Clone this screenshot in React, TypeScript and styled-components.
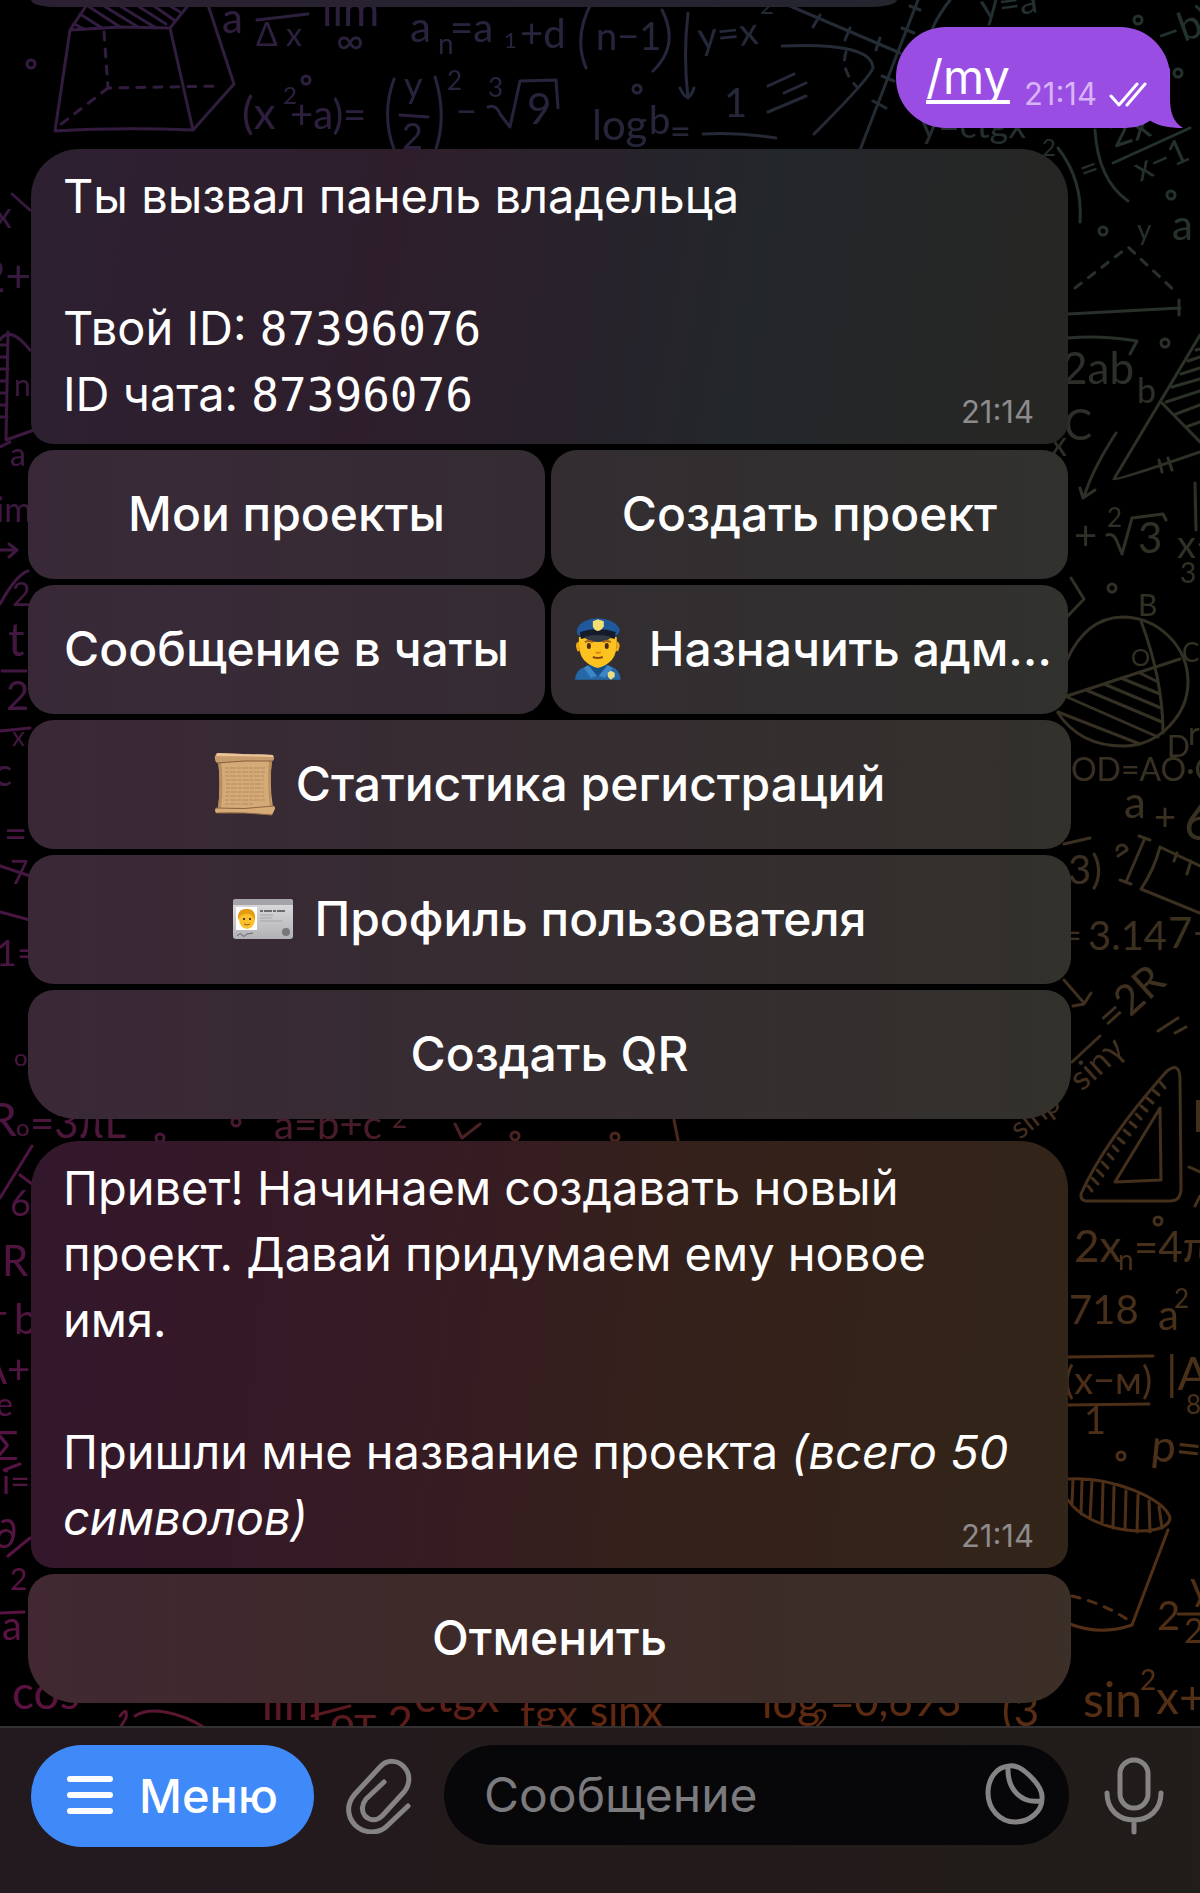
import React from "react";
import styled, { createGlobalStyle, css } from "styled-components";

const GlobalStyle = createGlobalStyle`
  * {
    box-sizing: border-box;
  }

  body {
    margin: 0;
    background: #000;
    color: #fff;
    font-family: Inter, "Noto Sans", sans-serif;
  }

  button,
  input {
    font: inherit;
    color: inherit;
    border: 0;
  }

  button {
    cursor: pointer;
  }
`;

const Screen = styled.div`
  position: relative;
  isolation: isolate;
  overflow: hidden;
  min-height: 100vh;
  display: flex;
  flex-direction: column;
`;

const WallpaperSvg = styled.svg`
  position: absolute;
  inset: 0;
  z-index: -1;
  width: 100%;
  height: 100%;
`;

const Chat = styled.main`
  flex: 1;
  display: flex;
  flex-direction: column;
  padding: 0 17px 22px 28px;
`;

const PreviousMessage = styled.div`
  width: 75%;
  height: 7px;
  margin-left: 3px;
  border-radius: 0 0 28px 24px / 0 0 7px 7px;
  background: linear-gradient(90deg, #2b2031, #24252f);
`;

const Outgoing = styled.div`
  position: relative;
  align-self: flex-end;
  display: flex;
  align-items: flex-end;
  height: 101px;
  margin: 20px 13px 21px 0;
  padding: 0 23px 18px 30px;
  border-radius: 50px 50px 44px 50px;
  background: #994de3;

  a {
    margin-bottom: 4px;
    color: inherit;
    font-size: 47px;
    line-height: 58px;
    text-decoration-thickness: 4px;
    text-underline-offset: 6px;
    text-decoration-skip-ink: none;
  }

  time {
    margin: 0 12px 0 14px;
    color: #d9b3f7;
    font-size: 31px;
    line-height: 32px;
  }
`;

const Tail = styled.svg`
  position: absolute;
  right: -13px;
  bottom: 0;
`;

const Checks = styled.svg`
  margin-bottom: 2px;
`;

const Bubble = styled.section<{ $warm?: boolean }>`
  position: relative;
  width: calc(100% - 118px);
  margin: 0 0 6px 3px;
  padding: 14px 32px 17px 32px;
  border-radius: 48px 48px 22px 22px;
  font-size: 47px;
  line-height: 66px;
  background: linear-gradient(100deg, #2d2031 0%, #2e1e2c 35%, #23262b 68%, #262723 100%);

  ${({ $warm }) =>
    $warm &&
    css`
      background: linear-gradient(97deg, #33172c 0%, #361a24 35%, #35211b 62%, #322519 100%);
    `}

  p {
    margin: 0;
    min-height: 66px;
  }

  time {
    position: absolute;
    right: 34px;
    bottom: 15px;
    color: #8e8b8c;
    font-size: 31px;
    line-height: 34px;
  }
`;

const Code = styled.code`
  font-family: "DejaVu Sans Mono", monospace;
  font-size: 46px;
  line-height: 1;
`;

const Keyboard = styled.div`
  display: flex;
  flex-direction: column;
  gap: 6px;
  width: calc(100% - 112px);
  margin-bottom: 22px;

  &:last-child {
    margin-bottom: 0;
  }
`;

const KeyRow = styled.div`
  display: grid;
  grid-template-columns: 1fr 1fr;
  gap: 6px;
  padding-right: 3px;
`;

const Key = styled.button<{ $tone?: "left" | "right" | "warm"; $last?: boolean }>`
  display: flex;
  align-items: center;
  justify-content: center;
  gap: 20px;
  min-width: 0;
  height: 129px;
  padding: 0 16px 2px;
  border-radius: ${({ $last }) => ($last ? "26px 26px 48px 48px" : "26px")};
  font-size: 48px;
  font-weight: 500;
  white-space: nowrap;
  background: ${({ $tone }) => {
    if ($tone === "left") return "linear-gradient(90deg, #392938, #352c33)";
    if ($tone === "right") return "linear-gradient(90deg, #332d31, #31312e)";
    if ($tone === "warm") return "linear-gradient(90deg, #412832, #3e2a29 40%, #3b2f28)";
    return "linear-gradient(90deg, #3a2837, #362d31 50%, #33312c)";
  }};
`;

const Composer = styled.form`
  display: flex;
  align-items: flex-start;
  height: 167px;
  padding: 17px 36px 0 31px;
  border-top: 2px solid #343133;
  background: linear-gradient(90deg, #231a20, #231a1b 50%, #211d1a);
`;

const MenuButton = styled.button`
  display: flex;
  align-items: center;
  justify-content: center;
  gap: 26px;
  width: 283px;
  height: 102px;
  margin-right: 32px;
  padding: 0 0 2px;
  border-radius: 51px;
  background: #3f89f9;
  font-size: 47px;
  font-weight: 500;
`;

const IconButton = styled.button`
  display: flex;
  align-items: center;
  justify-content: center;
  height: 102px;
  padding: 0;
  background: none;
  color: #868385;
`;

const Field = styled.label`
  flex: 1;
  min-width: 0;
  display: flex;
  align-items: center;
  height: 100px;
  margin: 0 35px 0 32px;
  padding: 0 24px 2px 40px;
  border-radius: 50px;
  background: #070609;
  color: #868385;

  input {
    flex: 1;
    min-width: 0;
    padding: 0;
    background: none;
    outline: none;
    color: #fff;
    font-size: 48px;

    &::placeholder {
      color: #7b7a7d;
      opacity: 1;
    }
  }
`;

type Note = [text: string, x: number, y: number, size: number, rotate?: number];

const notes: Note[] = [
  ["a", 222, 33, 42], ["Δ x", 256, 46, 32], ["lim", 322, 26, 44], ["∞", 336, 54, 38],
  ["a", 410, 42, 42], ["n", 438, 54, 28], ["=a", 450, 42, 40], ["1", 504, 48, 22],
  ["+d", 520, 48, 40], ["n−1", 596, 50, 38], ["(x", 242, 129, 44], ["2", 283, 104, 24],
  ["+a)=", 290, 129, 40], ["y", 404, 98, 36], ["2", 402, 149, 36], ["2", 447, 90, 26],
  ["−", 456, 124, 36], ["3", 488, 97, 26], ["9", 527, 124, 42], ["y=x", 699, 50, 38, -6],
  ["2", 760, 14, 24], ["log", 592, 140, 42], ["b", 649, 134, 38], ["=", 670, 144, 36],
  ["1", 724, 117, 40], ["y=a", 982, 20, 36, -8], ["y=ctgx", 920, 138, 36], ["−b)", 1162, 50, 40, -20],
  ["2", 1042, 156, 24], ["=", 1084, 182, 32, -20], ["2x", 1114, 148, 38, -18], ["x−1", 1140, 182, 34, -24],
  ["y", 1137, 240, 28], ["a", 1172, 240, 42], ["2ab", 1062, 384, 44], ["b", 1137, 403, 34],
  ["C", 1064, 440, 42], ["+", 1074, 550, 40], ["2", 1107, 527, 26], ["3", 1138, 553, 42],
  ["x−", 1177, 558, 38], ["3", 1180, 583, 28], ["B", 1138, 616, 30], ["O", 1131, 666, 24],
  ["C", 1182, 662, 26], ["D", 1167, 757, 30], ["r", 1188, 745, 32], ["OD=AO·O", 1071, 781, 32],
  ["a", 1124, 818, 44], ["+", 1154, 830, 38], ["6", 1184, 840, 52], ["3)", 1068, 884, 40],
  ["=", 1062, 948, 34], ["3.14", 1088, 950, 40], ["7−", 1168, 948, 42],
  ["=2R", 1112, 1034, 42, -42], ["sinγ", 1082, 1092, 34, -42], ["sinβ", 1020, 1140, 30, -38],
  ["2x", 1074, 1262, 44], ["n", 1118, 1270, 28], ["=4π", 1134, 1262, 42], ["718", 1069, 1324, 40],
  ["a", 1158, 1330, 42], ["2", 1174, 1308, 26], ["(x−м)", 1064, 1394, 38], ["1", 1084, 1434, 38],
  ["|A", 1166, 1390, 46], ["p=", 1150, 1460, 44, 6], ["8", 1186, 1414, 26], ["2", 1157, 1630, 40],
  ["y", 1190, 1600, 40], ["2", 1184, 1643, 34], ["sin", 1083, 1717, 48], ["2", 1140, 1690, 28],
  ["x+", 1156, 1714, 46], ["R", 1192, 1132, 44],
  ["x", -6, 228, 36], ["2+", -20, 292, 44], ["n", 14, 396, 30], ["a", 10, 466, 32],
  ["im", -4, 522, 34], ["2", 12, 606, 32], ["t", 8, 656, 46], ["2", 6, 710, 40],
  ["x", 12, 746, 26], ["c", -6, 786, 38], ["=", 4, 848, 40], ["7", 10, 884, 32],
  ["1=", -4, 966, 36], ["o", 14, 1066, 24], ["R", -12, 1136, 46],
  ["o", 16, 1136, 24], ["=3πL", 30, 1138, 42], ["6", 10, 1216, 36], ["R", 2, 1276, 42],
  ["+", -14, 1326, 38], ["b", 14, 1334, 42], ["A+", -20, 1384, 40], ["e", -4, 1416, 32],
  ["Σ", -6, 1460, 40], ["i=", 2, 1494, 34], ["∂", -6, 1548, 40], ["2", 10, 1590, 30],
  ["a", 2, 1640, 40], ["a=b+c", 274, 1139, 40], ["2", 392, 1128, 26], ["cos", 12, 1709, 46],
  ["lim", 262, 1720, 46], ["от 2", 330, 1738, 44], ["ctgx", 414, 1712, 46], ["tgx", 520, 1730, 42],
  ["sinx", 590, 1726, 42], ["log", 762, 1718, 44], ["2", 812, 1730, 28], ["=0,693", 830, 1716, 42],
  ["(3", 1002, 1726, 44], ["x", 1050, 456, 34],
];

const shapes = [
  // truncated pyramid
  "M70 30 120 27 170 28 193 130Q120 127 55 131L70 30 88 3M170 28 190 3M208 5 234 84 193 130",
  "M74 24 84 29M80 14 102 28M88 6 120 27M104 6 138 27M120 6 156 28M138 6 166 24M154 6 174 20M170 6 180 12",
  "M257 20 308 14M400 115 428 117M394 79Q381 115 394 149M435 77Q447 115 436 149",
  "M488 107Q496 104 500 114L510 127 520 81 556 80 558 108",
  "M592 2Q573 36 586 68M662 10Q680 45 653 71M688 13Q683 55 688 98M680 88Q688 106 694 88",
  "M703 134Q740 132 776 138M768 86 794 74M784 93 806 83M768 112 806 96",
  "M782 46Q872 42 873 68Q868 80 814 134M790 6 900 53M820 15 813 27M850 28 845 40M880 38 876 50",
  "M918 0 860 150M910 6 920 10M902 28 914 33M882 76 894 81M873 101 886 108M950 0Q930 26 930 40",
  "M1058 148Q1083 180 1080 222M1095 130Q1098 180 1128 201M1113 163 1190 128",
  "M1068 314 1180 308M1179 300 1179 315M1068 338Q1100 335 1137 341L1130 354",
  // hatched triangle
  "M1200 335 1114 479Q1116 481 1200 452M1161 402 1200 442M1196 350 1200 349M1188 361 1200 357M1181 374 1200 368M1172 387 1200 379M1166 402 1200 391M1176 414 1200 405M1186 427 1200 422M1159 460 1162 472M1168 458 1172 470",
  "M1116 433Q1092 470 1084 497M1080 488 1083 498 1095 490M1107 535Q1114 532 1118 544L1122 554 1132 518 1163 514 1166 520M1195 483 1196 530",
  // circle with a shaded sector
  "M1058 713Q1080 746 1123 746C1160 746 1188 714 1188 682C1188 646 1158 617 1122 617Q1086 618 1067 660",
  "M1067 696 1180 659M1141 621Q1163 680 1163 733M1058 712 1140 744M1067 697 1158 737M1086 690 1162 722M1104 684 1161 708M1121 678 1160 694M1140 673 1158 682M1071 578 1084 599 1066 618",
  // ruler
  "M1200 866 1160 847Q1154 870 1141 889L1200 913M1177 853 1174 861M1191 861 1187 874M1139 836 1150 840M1145 838 1126 882M1120 880 1131 884M1064 844 1090 838M1117 850A5 5 0 1 1 1127 850L1118 856",
  "M1064 980 1084 1003M1073 1006 1084 1004 1091 993M1072 1062 1100 1036M1158 1031 1178 1018M1175 1033 1186 1027",
  // set square
  "M1180 1080Q1180 1060 1166 1072Q1104 1142 1081 1194Q1080 1200 1086 1201L1170 1201Q1181 1201 1181 1188ZM1160 1108 1115 1182 1161 1180Z",
  "M1088 1186 1092 1191M1092 1178 1098 1184M1097 1170 1103 1176M1102 1162 1108 1168M1108 1154 1113 1159M1113 1146 1118 1151M1118 1138 1124 1143M1124 1130 1130 1135M1130 1122 1136 1127M1136 1114 1141 1119M1141 1106 1147 1111M1147 1098 1153 1103M1153 1090 1159 1095M1160 1082 1165 1088",
  "M1068 1357 1153 1356M1068 1405 1149 1404M1178 1614 1200 1614M1189 1167 1200 1172M1195 1206 1200 1196",
  // glass
  "M1068 1479C1110 1476 1165 1498 1170 1518C1168 1540 1090 1534 1068 1500M1168 1530 1132 1625Q1100 1636 1070 1624M1073 1480 1072 1504M1082 1480 1081 1514M1092 1481 1090 1519M1103 1484 1102 1524M1114 1487 1113 1528M1126 1491 1125 1530M1138 1495 1137 1532M1149 1501 1150 1532M1159 1507 1162 1528",
  // left edge
  "M12 194 30 210M0 340Q10 325 30 350M8 332 6 440 34 430M0 345 8 345M0 357 8 357M0 369 8 369M0 381 7 381M0 393 7 393M0 405 7 405M0 417 7 417M0 447 10 442",
  "M0 550 16 550M9 544 17 550 9 557M0 604Q16 575 28 571M2 671 26 671M0 731 30 728M0 866 30 876M0 912 30 920M0 1198 32 1146M20 1175 32 1184M4 1470 20 1464M8 1556 30 1538M0 1613 24 1612",
  "M455 1124 462 1138 480 1124M674 1120 678 1140M135 1716C150 1706 180 1712 205 1728M120 1716Q128 1706 126 1718L120 1728M312 1716 350 1706",
];

const dashes = [
  "M104 32 108 88 220 86M108 88 60 125M846 52Q840 70 858 88",
  "M1075 288 1128 247 1177 293M1072 1596Q1105 1604 1128 1620",
];

const dots = [
  [31, 64], [306, 80], [637, 89], [1138, 20], [1178, 73], [1171, 195], [1103, 231], [1165, 343],
  [1112, 588], [1158, 1221], [1121, 1456], [160, 1138], [236, 1122], [515, 1136], [615, 1137],
];

const Wallpaper = () => (
  <WallpaperSvg viewBox="0 0 1200 1893" preserveAspectRatio="xMidYMin slice" aria-hidden="true">
    <defs>
      <linearGradient id="cool">
        <stop offset="0" stopColor="#351a40" />
        <stop offset="0.5" stopColor="#25253c" />
        <stop offset="1" stopColor="#22332b" />
      </linearGradient>
      <linearGradient id="hot">
        <stop offset="0" stopColor="#5c1244" />
        <stop offset="0.3" stopColor="#5c1a1c" />
        <stop offset="0.5" stopColor="#66280f" />
        <stop offset="1" stopColor="#543014" />
      </linearGradient>
      <linearGradient id="fade" x2="0" y2="1">
        <stop offset="0.05" stopColor="#000" />
        <stop offset="0.92" stopColor="#fff" />
      </linearGradient>
      <mask id="lower">
        <rect width="1200" height="1893" fill="url(#fade)" />
      </mask>
      <mask id="chalk" maskUnits="userSpaceOnUse" x="0" y="0" width="1200" height="1893">
        <g fill="none" stroke="#fff" strokeWidth="3" strokeLinecap="round" strokeLinejoin="round">
          {shapes.map((d) => (
            <path key={d} d={d} />
          ))}
          {dashes.map((d) => (
            <path key={d} d={d} strokeDasharray="8 9" />
          ))}
          {dots.map(([cx, cy]) => (
            <circle key={`${cx}-${cy}`} cx={cx} cy={cy} r="4" />
          ))}
        </g>
        <g fill="#fff" fontFamily="Lato, sans-serif">
          {notes.map(([text, x, y, size, rotate = 0], i) => (
            <text key={i} fontSize={size} transform={`translate(${x} ${y}) rotate(${rotate})`}>
              {text}
            </text>
          ))}
        </g>
      </mask>
    </defs>
    <g mask="url(#chalk)">
      <rect width="1200" height="1893" fill="url(#cool)" />
      <rect width="1200" height="1893" fill="url(#hot)" mask="url(#lower)" />
    </g>
  </WallpaperSvg>
);

const Officer = () => (
  <svg width="62" height="64" viewBox="0 0 62 64" aria-hidden="true">
    <path d="M8 63Q9 52 18 50L27 47H36L45 50Q53 52 54 63Z" fill="#2468a8" />
    <path d="M22 48 31 60 41 48 36 44H27Z" fill="#174e86" />
    <path d="M21 48 30 59 24 61 17 51ZM41 48 32 59 38 61 46 51Z" fill="#3c86c6" />
    <path d="M12 20Q11 37 17 43Q24 50 31 51Q38 50 45 43Q51 37 50 20Z" fill="#fcc21f" />
    <path d="M12 26Q9 27 12 34M50 26Q53 27 50 34" stroke="#efa816" strokeWidth="3" fill="none" />
    <path d="M10 13C12 4 24 1 31 1S50 4 53 12Q53 17 49 19Q31 10 13 19Q9 17 10 13Z" fill="#1f589b" />
    <path d="M13 15Q31 9 49 15L48 22Q31 17 14 22Z" fill="#151b2b" />
    <path d="M17 20Q31 16 45 20Q40 25 31 25T17 20Z" fill="#343744" />
    <path d="M26 4 31 2 37 4V9Q35 13 31 14Q27 13 26 9Z" fill="#f2df73" />
    <ellipse cx="22" cy="29" rx="2" ry="3" fill="#4b2b13" />
    <ellipse cx="40" cy="29" rx="2" ry="3" fill="#4b2b13" />
    <path d="M18 25Q22 23 26 25M36 25Q40 23 44 25" stroke="#a5641b" strokeWidth="2" fill="none" />
    <path d="M29 35Q31 37 34 35" stroke="#d98c13" strokeWidth="2" fill="none" />
    <path d="M26 40Q31 42 36 40" stroke="#8b4a16" strokeWidth="2" fill="none" />
    <path d="M41 56 44 54 48 56V60L44 63 41 60Z" fill="#e9dd82" />
  </svg>
);

const Scroll = () => (
  <svg width="62" height="64" viewBox="0 0 62 64" aria-hidden="true">
    <path d="M4 8H58Q55 32 59 56L4 57Q7 32 4 8Z" fill="#d3aa78" />
    <path d="M4 8Q7 32 4 57L7 56Q10 32 7 9ZM58 9Q55 32 58 56L56 56Q53 32 55 9Z" fill="#b98f5e" />
    <path
      d="M11 16H52M11 20H51M11 24H50M12 28H50M12 32H49M12 36H50M12 40H50M11 44H50M11 48H51M11 52H40"
      stroke="#b58a5b"
      strokeWidth="1"
      strokeDasharray="4 1 6 1"
    />
    <path d="M3 1Q30 2 59 3Q61 6 59 9Q30 8 3 11Q0 8 1 4Z" fill="#c79c6c" />
    <path d="M3 1Q30 2 59 3V5Q30 4 2 4Z" fill="#e8c496" />
    <path d="M3 11Q30 8 59 9" stroke="#845f3b" strokeWidth="1" fill="none" />
    <path d="M2 56Q30 58 60 54Q62 56 60 59L58 63Q30 60 2 61Q0 58 2 56Z" fill="#d6ab77" />
    <path d="M2 56Q30 58 60 54M3 61Q30 60 58 63" stroke="#8c663f" strokeWidth="1" fill="none" />
  </svg>
);

const IdCard = () => (
  <svg width="62" height="42" viewBox="0 0 62 42" aria-hidden="true">
    <defs>
      <linearGradient id="card" x2="0" y2="1">
        <stop offset="0" stopColor="#dedee0" />
        <stop offset="1" stopColor="#b2b1b5" />
      </linearGradient>
    </defs>
    <rect x="1" y="1" width="60" height="40" rx="3" fill="url(#card)" />
    <path d="M1 7V4Q1 1 4 1H58Q61 1 61 4V7Z" fill="#a5a4a8" />
    <rect x="4" y="9" width="21" height="23" fill="#fff" />
    <ellipse cx="15" cy="21" rx="8" ry="10" fill="#fbc02b" />
    <path d="M6 22Q5 11 14 11Q24 10 23 22Q20 15 15 16Q9 15 6 22Z" fill="#e49b13" />
    <path d="M12 20V22M18 20V22" stroke="#53361c" strokeWidth="2" />
    <path d="M12 26Q15 28 18 26" stroke="#9a5719" strokeWidth="1" fill="none" />
    <path d="M28 13H53" stroke="#6a6a6f" strokeWidth="2" strokeDasharray="3 1 8 1" />
    <path d="M28 17H41M28 20H40M28 23H50" stroke="#a5a5a9" strokeWidth="1" />
    <path d="M5 38Q9 34 10 37T15 36L21 35" stroke="#65656a" strokeWidth="1" fill="none" />
    <circle cx="54" cy="34" r="4" fill="#77767b" />
  </svg>
);

const MenuIcon = () => (
  <svg width="46" height="38" viewBox="0 0 46 38" aria-hidden="true">
    <path d="M3 3H43M3 19H43M3 35H43" stroke="currentColor" strokeWidth="6" strokeLinecap="round" />
  </svg>
);

const ClipIcon = () => (
  <svg width="66" height="76" viewBox="0 0 66 76" fill="none" aria-hidden="true">
    <path
      d="M62 48 41 68C33 76 18 76 9 67C0 57 1 45 9 36L34 9C41 1 52 2 58 9C65 16 64 27 58 34L36 58C31 63 24 63 19 58C15 53 16 46 20 41L38 24"
      stroke="currentColor"
      strokeWidth="5"
      strokeLinecap="round"
      strokeLinejoin="round"
    />
  </svg>
);

const StickerIcon = () => (
  <svg width="60" height="62" viewBox="0 0 60 62" fill="none" aria-hidden="true">
    <path
      d="M24 3C11 4 3 16 3 30C3 46 15 59 30 59C45 59 57 48 57 36C58 28 53 21 46 14C38 6 32 2 24 3ZM23 4C22 24 34 41 56 38"
      stroke="currentColor"
      strokeWidth="5"
      strokeLinejoin="round"
    />
  </svg>
);

const MicIcon = () => (
  <svg width="60" height="78" viewBox="0 0 60 78" fill="none" aria-hidden="true">
    <rect x="16" y="3" width="28" height="48" rx="14" stroke="currentColor" strokeWidth="5" />
    <path
      d="M3 36C3 53 15 63 30 63S57 53 57 36M30 63V75"
      stroke="currentColor"
      strokeWidth="5"
      strokeLinecap="round"
    />
  </svg>
);

const App = () => (
  <>
    <GlobalStyle />
    <Screen>
      <Wallpaper />
      <Chat>
        <PreviousMessage />
        <Outgoing>
          <a href="#my">/my</a>
          <time>21:14</time>
          <Checks width="38" height="26" viewBox="0 0 38 26" fill="none" aria-hidden="true">
            <path
              d="M2 14 10 23 28 2M18 23 36 2"
              stroke="#fff"
              strokeWidth="3"
              strokeLinecap="round"
              strokeLinejoin="round"
            />
          </Checks>
          <Tail width="34" height="60" viewBox="0 0 34 60" aria-hidden="true">
            <path d="M21 0V30C21 44 24 54 34 60C20 60 9 58 0 52V20Z" fill="#994de3" />
          </Tail>
        </Outgoing>

        <Bubble>
          <p>Ты вызвал панель владельца</p>
          <p />
          <p>
            Твой ID: <Code>87396076</Code>
          </p>
          <p>
            ID чата: <Code>87396076</Code>
          </p>
          <time>21:14</time>
        </Bubble>
        <Keyboard>
          <KeyRow>
            <Key type="button" $tone="left">Мои проекты</Key>
            <Key type="button" $tone="right">Создать проект</Key>
          </KeyRow>
          <KeyRow>
            <Key type="button" $tone="left">Сообщение в чаты</Key>
            <Key type="button" $tone="right">
              <Officer />
              Назначить адм…
            </Key>
          </KeyRow>
          <Key type="button">
            <Scroll />
            Статистика регистраций
          </Key>
          <Key type="button">
            <IdCard />
            Профиль пользователя
          </Key>
          <Key type="button" $last>Создать QR</Key>
        </Keyboard>

        <Bubble $warm>
          <p>Привет! Начинаем создавать новый проект. Давай придумаем ему новое имя.</p>
          <p />
          <p>
            Пришли мне название проекта <em>(всего 50 символов)</em>
          </p>
          <time>21:14</time>
        </Bubble>
        <Keyboard>
          <Key type="button" $tone="warm" $last>Отменить</Key>
        </Keyboard>
      </Chat>

      <Composer onSubmit={(e) => e.preventDefault()}>
        <MenuButton type="button">
          <MenuIcon />
          Меню
        </MenuButton>
        <IconButton type="button" aria-label="Прикрепить файл">
          <ClipIcon />
        </IconButton>
        <Field>
          <input type="text" placeholder="Сообщение" aria-label="Сообщение" />
          <StickerIcon />
        </Field>
        <IconButton type="button" aria-label="Голосовое сообщение">
          <MicIcon />
        </IconButton>
      </Composer>
    </Screen>
  </>
);

export default App;
